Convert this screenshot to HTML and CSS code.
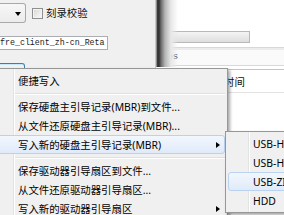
FILE: index.html
```html
<!DOCTYPE html>
<html lang="zh-CN">
<head>
<meta charset="utf-8">
<title>UltraISO</title>
<link rel="stylesheet" href="styles.css">
</head>
<body>
<div class="screen">
  <div class="main-window">
    <div class="top-row">
      <div class="combo"><span class="combo-arrow"></span></div>
      <span class="checkbox"></span>
      <span class="check-label">刻录校验</span>
    </div>
    <div class="path-field">fre_client_zh-cn_Reta</div>
    <div class="default-btn"></div>
  </div>

  <div class="side-window">
    <div class="sw-top"></div>
    <div class="sw-bar"></div>
    <div class="sw-row">les</div>
    <div class="listview">
      <div class="lv-header"><span class="lv-col">时间</span></div>
    </div>
  </div>

  <div class="menu main-menu">
    <div class="mi">便捷写入</div>
    <div class="msep"></div>
    <div class="mi">保存硬盘主引导记录(MBR)到文件...</div>
    <div class="mi">从文件还原硬盘主引导记录(MBR)...</div>
    <div class="mi active">写入新的硬盘主引导记录(MBR)<span class="arrow"></span></div>
    <div class="msep"></div>
    <div class="mi">保存驱动器引导扇区到文件...</div>
    <div class="mi">从文件还原驱动器引导扇区...</div>
    <div class="mi">写入新的驱动器引导扇区<span class="arrow"></span></div>
  </div>

  <div class="menu sub-menu">
    <div class="mi">USB-HDD</div>
    <div class="mi">USB-HDD+</div>
    <div class="mi active">USB-ZIP</div>
    <div class="mi">HDD</div>
  </div>
</div>
</body>
</html>
```

FILE: styles.css
```css
html, body {
  margin: 0;
  padding: 0;
  background: #f0f0f0;
}

.screen {
  position: relative;
  width: 284px;
  height: 215px;
  overflow: hidden;
  background: #f0f0f0;
  font-family: "Noto Sans", "Noto Sans CJK SC", sans-serif;
  font-size: 10.4px;
  color: #000;
}

/* ---------- left (main) window ---------- */
.main-window {
  width: 155px;
  height: 215px;
  box-sizing: border-box;
  padding-top: 3px;
  display: flex;
  flex-direction: column;
  align-items: flex-start;
}

.top-row {
  display: flex;
  align-items: center;
  height: 20px;
}

.combo {
  width: 26px;
  height: 20px;
  box-sizing: border-box;
  border: 1px solid #a9a9a9;
  border-left: none;
  border-radius: 0 3px 3px 0;
  background: linear-gradient(#f7f7f7, #ececec);
  display: flex;
  align-items: center;
  justify-content: flex-end;
  padding-right: 4px;
}

.combo-arrow {
  width: 0;
  height: 0;
  border-left: 3px solid transparent;
  border-right: 3px solid transparent;
  border-top: 4px solid #000;
  margin-top: 1px;
}

.checkbox {
  width: 11px;
  height: 11px;
  box-sizing: border-box;
  margin-left: 6px;
  border: 1px solid #8e8f8f;
  background: linear-gradient(135deg, #d6d6d6, #fbfbfb);
  box-shadow: inset 0 0 0 1px #f4f4f4;
}

.check-label {
  margin-left: 3px;
  line-height: 14px;
  color: #111;
}

.path-field {
  margin-top: 13px;
  width: 108px;
  height: 14px;
  box-sizing: border-box;
  border: 1px solid #abadb3;
  border-left: none;
  background: #fff;
  font-family: "Liberation Mono", monospace;
  font-size: 8.3px;
  line-height: 12px;
  color: #222;
  white-space: nowrap;
  overflow: hidden;
}

.default-btn {
  margin-top: 13px;
  width: 25px;
  height: 30px;
  box-sizing: border-box;
  border: 1px solid #3c7fb1;
  border-left: none;
  border-radius: 0 3px 3px 0;
  background: linear-gradient(#f4f4f4, #e6e6e6);
  box-shadow: inset 0 1px 0 #c6e8f8;
}

/* ---------- right window ---------- */
.side-window {
  position: absolute;
  left: 155px;
  top: 0;
  width: 129px;
  height: 215px;
  box-sizing: border-box;
  border-left: 1px solid #c9c9c9;
  background: #fff;
  display: flex;
  flex-direction: column;
}

.side-window::before {
  content: "";
  position: absolute;
  left: 0;
  top: 0;
  width: 22px;
  height: 67px;
  background: linear-gradient(to right,
    #8c8c8c 0, #8c8c8c 1px,
    #3c3c3c 1px, #333 3px,
    #6a6a6a 5px, #b5b5b5 9px,
    #e8e8e8 15px, rgba(255, 255, 255, 0) 22px);
  z-index: 1;
}

.sw-top {
  height: 31px;
}

.sw-bar {
  margin-left: 6px;
  width: 88px;
  height: 12px;
  box-sizing: border-box;
  border: 1px solid #b9b9b9;
  background: linear-gradient(#f4f4f4, #dedede);
}

.sw-row {
  margin-top: 4px;
  height: 19px;
  box-sizing: border-box;
  border-top: 1px solid #d8d8d8;
  border-bottom: 1px solid #d8d8d8;
  box-shadow: inset 0 2px 0 #ececec;
  background: #fafafa;
  padding-left: 6px;
  padding-top: 3px;
  font-family: "Liberation Mono", monospace;
  font-size: 9px;
  line-height: 13px;
  color: #333;
}

.listview {
  margin-top: 3px;
  flex: 1;
  border-top: 1px solid #c4c4c4;
  background: #fff;
}

.lv-header {
  height: 23px;
  box-sizing: border-box;
  border-bottom: 1px solid #e3e3e3;
  display: flex;
  align-items: center;
  padding-left: 68px;
}

.lv-col {
  color: #111;
}

/* ---------- menus ---------- */
.menu {
  position: absolute;
  box-sizing: border-box;
  border: 1px solid #979797;
  padding: 2px;
  background-color: #f0f0f0;
  box-shadow: 2px 2px 3px rgba(0, 0, 0, 0.35);
  z-index: 5;
}

.main-menu {
  left: -20px;
  top: 68px;
  width: 248px;
  background-image: linear-gradient(to right,
    transparent 32px, #e2e3e3 32px, #e2e3e3 33px,
    #ffffff 33px, #ffffff 34px, transparent 34px);
}

.sub-menu {
  left: 225px;
  top: 131px;
  width: 90px;
  z-index: 6;
  background-image: linear-gradient(to right,
    transparent 22px, #e2e3e3 22px, #e2e3e3 23px,
    #ffffff 23px, #ffffff 24px, transparent 24px);
}

.mi {
  height: 19px;
  box-sizing: border-box;
  border: 1px solid transparent;
  border-radius: 3px;
  display: flex;
  align-items: center;
  white-space: nowrap;
  padding-right: 4px;
}

.main-menu .mi {
  padding-left: 34px;
}

.sub-menu .mi {
  padding-left: 24px;
}

.mi.active {
  border-color: #b9d2f1;
  background: linear-gradient(#f2f7fd, #e0eaf8);
}

.arrow {
  margin-left: auto;
  width: 0;
  height: 0;
  border-top: 3.5px solid transparent;
  border-bottom: 3.5px solid transparent;
  border-left: 4px solid #000;
}

.msep {
  height: 7px;
  margin-left: 32px;
  background: linear-gradient(to bottom,
    transparent 3px, #e0e0e0 3px, #e0e0e0 4px,
    #ffffff 4px, #ffffff 5px, transparent 5px);
}
```
